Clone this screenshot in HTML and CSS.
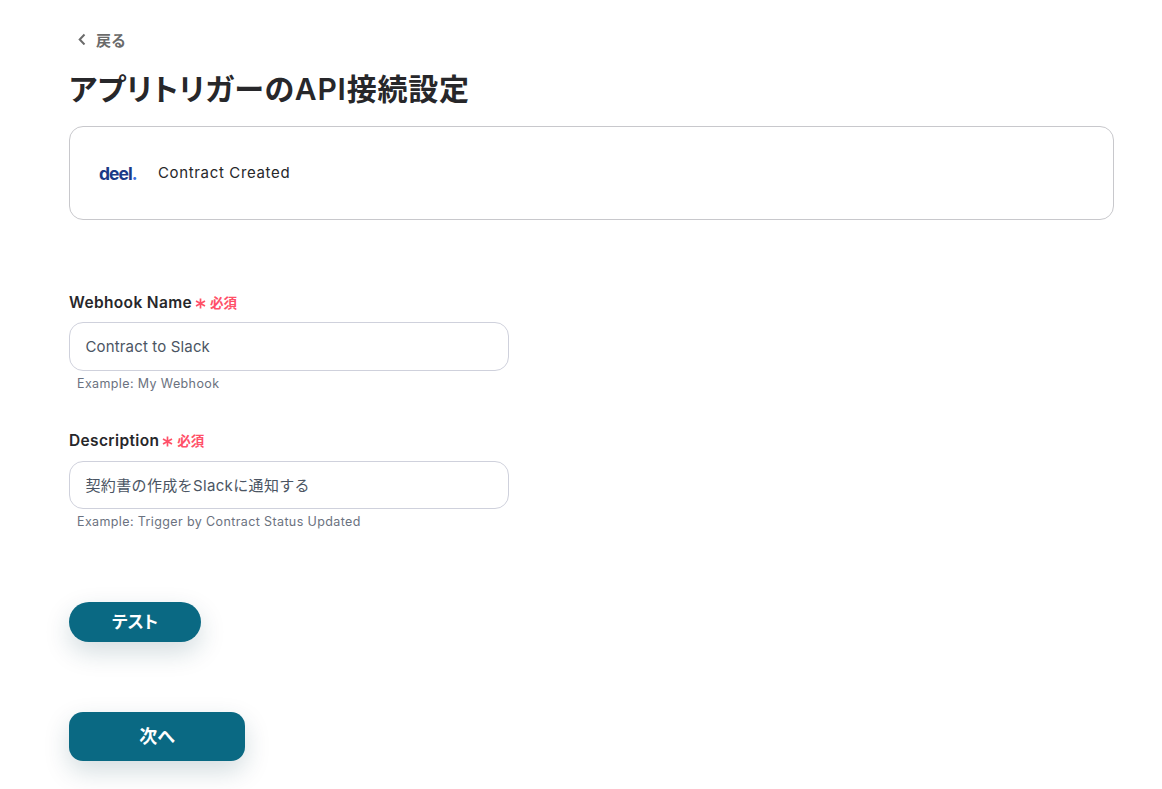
FILE: index.html
```html
<!DOCTYPE html>
<html lang="ja">
<head>
<meta charset="utf-8">
<title>アプリトリガーのAPI接続設定</title>
<link rel="stylesheet" href="styles.css">
</head>
<body>
<main class="page">
  <a class="back" href="#">
    <svg class="back-icon" width="12" height="12" viewBox="0 0 12 12" aria-hidden="true"><path d="M8.5 1.5 3.7 6.5l4.8 5" fill="none" stroke="currentColor" stroke-width="2"/></svg>
    <span>戻る</span>
  </a>
  <h1 class="title">アプリトリガーのAPI接続設定</h1>
  <section class="card">
    <span class="logo">deel<span class="logo-dot">.</span></span>
    <span class="card-text">Contract Created</span>
  </section>
  <form class="form">
    <div class="field">
      <div class="label-row"><span class="label">Webhook Name</span><svg class="req-mark" width="11" height="11" viewBox="0 0 11 11" aria-hidden="true"><path d="M5.5 0.5v10M1 3l9 5M10 3 1 8" fill="none" stroke="currentColor" stroke-width="1.7"/></svg><span class="req-text">必須</span></div>
      <div class="input">Contract to Slack</div>
      <p class="hint">Example: My Webhook</p>
    </div>
    <div class="field">
      <div class="label-row"><span class="label">Description</span><svg class="req-mark" width="11" height="11" viewBox="0 0 11 11" aria-hidden="true"><path d="M5.5 0.5v10M1 3l9 5M10 3 1 8" fill="none" stroke="currentColor" stroke-width="1.7"/></svg><span class="req-text">必須</span></div>
      <div class="input input-cjk">契約書の作成をSlackに通知する</div>
      <p class="hint">Example: Trigger by Contract Status Updated</p>
    </div>
    <button class="btn btn-test" type="button">テスト</button>
    <button class="btn btn-next" type="button">次へ</button>
  </form>
</main>
</body>
</html>
```

FILE: styles.css
```css
* { box-sizing: border-box; }
html, body { margin: 0; background: #fff; }
body {
  font-family: Inter, "Noto Sans CJK JP", sans-serif;
  color: #27272a;
  overflow: hidden;
  height: 789px;
}
.page { width: 1114px; padding: 29px 0 0 69px; }
.back {
  display: flex; align-items: center; gap: 8px;
  height: 20px; padding-left: 7px;
  color: #6b6b6b; font-size: 15px; font-weight: 600; text-decoration: none;
}
.back-icon { display: block; }
.title {
  margin: 21px 0 0; font-size: 30px; line-height: 38px; font-weight: 600; color: #27272a;
  letter-spacing: 0.8px;
  font-feature-settings: "palt";
}
.card {
  display: flex; align-items: center; gap: 21px;
  height: 94px; margin-top: 18px; padding-left: 29px;
  border: 1px solid #c8c8cc; border-radius: 14px;
}
.logo {
  width: 38px;
  font-size: 17.5px; font-weight: 700; letter-spacing: -1px; color: #1b3a87;
}
.logo-dot { color: #3b6fe0; }
.card-text { font-size: 15px; letter-spacing: 0.65px; color: #27272a; padding-bottom: 2px; }
.form { display: flex; flex-direction: column; align-items: flex-start; margin-top: 71px; }
.field { width: 440px; margin-bottom: 38.7px; }
.label-row { display: flex; align-items: center; height: 22px; margin-bottom: 9.2px; }
.label { font-size: 15.5px; font-weight: 600; letter-spacing: 0.36px; color: #27272a; }
.req-mark { margin: 2px 0 0 3px; color: #ff5068; }
.req-text { margin-left: 4px; font-size: 13.5px; font-weight: 600; color: #ff5068; }
.input {
  display: flex; align-items: center;
  height: 48.5px; padding: 0 15.5px;
  border: 1px solid #cfd1dc; border-radius: 14px;
  font-size: 15px; letter-spacing: 0.15px; color: #4b5563;
}
.input-cjk { letter-spacing: 0.35px; }
.hint { margin: 5px 0 0 8px; font-size: 12.5px; line-height: 15px; letter-spacing: 0.38px; color: #6b7280; }
.btn {
  display: block; border: 0; color: #fff; background: #0a6983;
  font-family: inherit; font-size: 17px; font-weight: 700; padding: 0 0 2px;
  font-feature-settings: "palt";
  box-shadow: 0 10px 26px rgba(11, 60, 80, 0.18);
}
.btn-test { width: 132px; height: 40px; border-radius: 20px; margin-top: 34px; }
.btn-next { width: 176px; height: 49px; border-radius: 14px; margin-top: 70px; font-size: 18px; }
```
